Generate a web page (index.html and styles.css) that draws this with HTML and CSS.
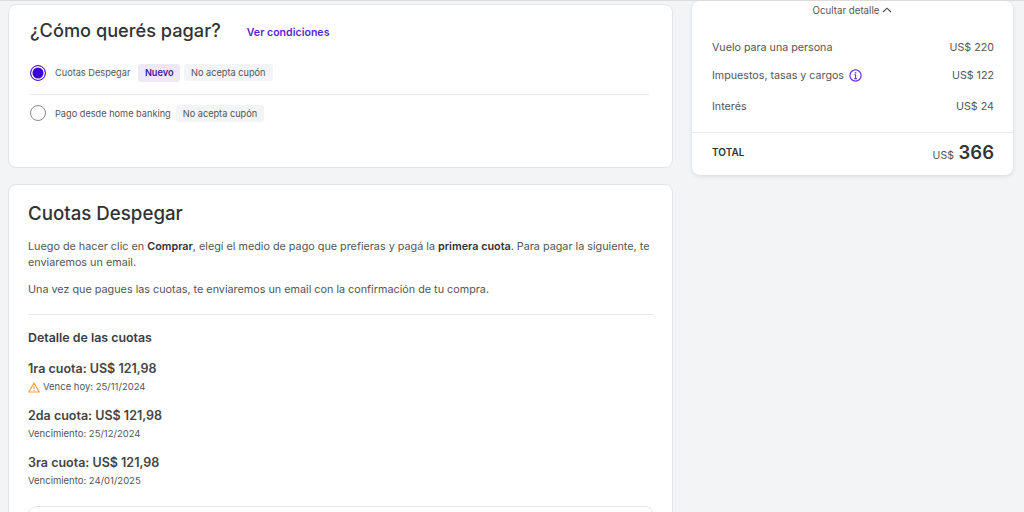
FILE: index.html
```html
<!DOCTYPE html>
<html lang="es">
<head>
    <meta charset="UTF-8">
    <title>Cómo querés pagar</title>
    <link rel="stylesheet" href="styles.css">
</head>
<body>
    <div class="page">
        <main class="main-col">
            <section class="card pay-card">
                <div class="pay-head">
                    <h1>¿Cómo querés pagar?</h1>
                    <a class="link" href="#">Ver condiciones</a>
                </div>
                <div class="option option-first">
                    <span class="radio radio-on"></span>
                    <span class="option-label">Cuotas Despegar</span>
                    <span class="tag tag-new">Nuevo</span>
                    <span class="tag">No acepta cupón</span>
                </div>
                <div class="option">
                    <span class="radio"></span>
                    <span class="option-label">Pago desde home banking</span>
                    <span class="tag">No acepta cupón</span>
                </div>
            </section>

            <section class="card detail-card">
                <h2>Cuotas Despegar</h2>
                <p class="text">Luego de hacer clic en <strong>Comprar</strong>, elegí el medio de pago que prefieras y pagá la <strong>primera cuota</strong>. Para pagar la siguiente, te enviaremos un email.</p>
                <p class="text">Una vez que pagues las cuotas, te enviaremos un email con la confirmación de tu compra.</p>
                <hr class="line">
                <h3>Detalle de las cuotas</h3>
                <div class="fee">
                    <div class="fee-title">1ra cuota: US$ 121,98</div>
                    <div class="fee-date fee-warn">
                        <svg width="12" height="11" viewBox="0 0 12 11"><path d="M6 1 L11.2 10 H0.8 Z" fill="none" stroke="#f5a13c" stroke-width="1.2" stroke-linejoin="round"/><path d="M6 4.2 V7" stroke="#f5a13c" stroke-width="1.1"/><path d="M6 7.9 V8.9" stroke="#f5a13c" stroke-width="1.1"/></svg>
                        Vence hoy: 25/11/2024
                    </div>
                </div>
                <div class="fee">
                    <div class="fee-title">2da cuota: US$ 121,98</div>
                    <div class="fee-date">Vencimiento: 25/12/2024</div>
                </div>
                <div class="fee">
                    <div class="fee-title">3ra cuota: US$ 121,98</div>
                    <div class="fee-date">Vencimiento: 24/01/2025</div>
                </div>
                <div class="next-box"></div>
            </section>
        </main>

        <aside class="card price-card">
            <div class="toggle">
                Ocultar detalle
                <svg width="10" height="6" viewBox="0 0 10 6"><path d="M1 5 L5 1.2 L9 5" fill="none" stroke="#4a4a4a" stroke-width="1.1"/></svg>
            </div>
            <div class="price-rows">
                <div class="price-row"><span>Vuelo para una persona</span><span>US$ 220</span></div>
                <div class="price-row">
                    <span class="with-icon">Impuestos, tasas y cargos
                        <svg width="13" height="13" viewBox="0 0 13 13"><circle cx="6.5" cy="6.5" r="5.6" fill="none" stroke="#6a2fe0" stroke-width="1.2"/><path d="M5.3 5.7 H6.6 V9.5 M5.2 9.6 H7.9" fill="none" stroke="#6a2fe0" stroke-width="1.1"/><path d="M6.5 3.2 V4.5" stroke="#6a2fe0" stroke-width="1.4"/></svg>
                    </span>
                    <span>US$ 122</span>
                </div>
                <div class="price-row"><span>Interés</span><span>US$ 24</span></div>
            </div>
            <div class="price-total">
                <span class="total-label">TOTAL</span>
                <span class="total-value"><small>US$</small> 366</span>
            </div>
        </aside>
    </div>
</body>
</html>
```

FILE: styles.css
```css
html, body {
    margin: 0;
    padding: 0;
    height: 512px;
    overflow: hidden;
}

body {
    font-family: Inter, "Noto Sans", sans-serif;
    background-color: #f3f4f6;
    color: #555;
    border-top: 1px solid #dcdcdc;
    box-sizing: border-box;
}

.page {
    display: flex;
    align-items: flex-start;
    gap: 19px;
    height: 511px;
    padding-left: 8px;
    overflow: hidden;
}

.main-col {
    width: 665px;
    padding-top: 3px;
    display: flex;
    flex-direction: column;
    gap: 16px;
}

.card {
    background-color: #fff;
    border: 1px solid #e4e6ea;
    border-radius: 8px;
    box-sizing: border-box;
}

.pay-card {
    height: 164px;
    flex: none;
    padding: 11px 23px 0 21px;
}

.pay-head {
    display: flex;
    align-items: center;
    gap: 26px;
    height: 28px;
    margin-bottom: 14px;
}

h1 {
    margin: 0;
    font-size: 18.2px;
    font-weight: 500;
    color: #333;
}

.link {
    font-size: 10.6px;
    font-weight: 600;
    color: #5a1fd1;
    text-decoration: none;
    padding-top: 4px;
}

.option {
    display: flex;
    align-items: center;
    height: 28px;
    font-size: 9.2px;
}

.option-first {
    height: 29px;
    padding-bottom: 7px;
    margin-bottom: 4px;
    border-bottom: 1px solid #e8e9ee;
}

.radio {
    width: 14px;
    height: 14px;
    border: 1px solid #8a8a8a;
    border-radius: 50%;
    margin-right: 9px;
    background-color: #fff;
    flex: none;
}

.radio-on {
    border: 1.5px solid #5a1fd1;
    box-shadow: inset 0 0 0 1.5px #fff;
    background-color: #3d00d6;
}

.option-label {
    margin-right: 5px;
}

.tag {
    background-color: #f3f4f6;
    border-radius: 3px;
    padding: 3px 7px;
    margin-right: 4px;
}

.tag-new {
    margin-left: 3px;
    padding: 3px 6.5px 4px;
    background-color: #efe8f8;
    color: #3c1f8c;
    font-weight: 600;
}

.detail-card {
    padding: 16px 19px 0;
    height: 340px;
    flex: none;
}

h2 {
    margin: 0 0 12px;
    font-size: 18.7px;
    font-weight: 500;
    color: #333;
    line-height: 26px;
}

.text {
    margin: 0 0 11px;
    font-size: 10.8px;
    line-height: 16px;
}

.text strong {
    font-weight: 600;
    color: #333;
}

.line {
    border: none;
    border-top: 1px solid #e8e9ee;
    margin: 16px 0 15px;
}

h3 {
    margin: 0 0 14px;
    font-size: 12.4px;
    font-weight: 600;
    line-height: 16px;
    color: #3c3c44;
}

.fee {
    margin-bottom: 11px;
}

.fee-title {
    font-size: 12.5px;
    font-weight: 600;
    line-height: 18px;
    color: #444;
}

.fee-date {
    font-size: 9.5px;
    line-height: 18px;
}

.fee-warn {
    display: flex;
    align-items: center;
    gap: 3px;
}

.next-box {
    height: 40px;
    margin-top: 16px;
    border: 1px solid #e4e6ea;
    border-radius: 8px;
}

.price-card {
    width: 321px;
    height: 174px;
    border: none;
    box-shadow: 0 1px 4px rgba(0, 0, 0, 0.12);
    font-size: 10.7px;
}

.toggle {
    display: flex;
    justify-content: center;
    align-items: center;
    gap: 3px;
    height: 18px;
    font-size: 9.7px;
}

.price-rows {
    height: 114px;
    padding: 14px 19px 0 20px;
    box-sizing: border-box;
    border-bottom: 1px solid #e8e9ee;
}

.price-row {
    display: flex;
    justify-content: space-between;
    align-items: center;
    height: 28px;
}

.price-row:last-child {
    margin-top: 3px;
}

.with-icon {
    display: flex;
    align-items: center;
    gap: 5px;
}

.price-total {
    display: flex;
    justify-content: space-between;
    align-items: center;
    padding: 8px 19px 0 20px;
}

.total-label {
    font-size: 10px;
    font-weight: 600;
    color: #333;
}

.total-value {
    font-size: 18.5px;
    font-weight: 600;
    color: #333;
}

.total-value small {
    font-size: 10.5px;
    font-weight: 400;
    color: #555;
}
```
